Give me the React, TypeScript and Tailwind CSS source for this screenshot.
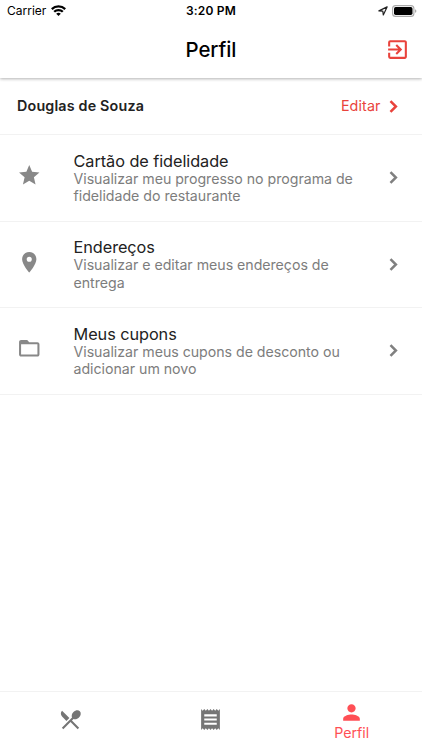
import React from 'react';
import {
  MdExitToApp,
  MdFolderOpen,
  MdLocationOn,
  MdPerson,
  MdReceipt,
  MdRestaurantMenu,
  MdStar,
} from 'react-icons/md';
import type { IconType } from 'react-icons';

interface MenuItem {
  title: string;
  description: string;
  icon: IconType;
}

const menuItems: MenuItem[] = [
  {
    title: 'Cartão de fidelidade',
    description: 'Visualizar meu progresso no programa de fidelidade do restaurante',
    icon: MdStar,
  },
  {
    title: 'Endereços',
    description: 'Visualizar e editar meus endereços de entrega',
    icon: MdLocationOn,
  },
  {
    title: 'Meus cupons',
    description: 'Visualizar meus cupons de desconto ou adicionar um novo',
    icon: MdFolderOpen,
  },
];

const Chevron: React.FC<{ className?: string }> = ({ className }) => (
  <svg className={`size-[25px] shrink-0 ${className ?? ''}`} viewBox="0 0 24 24" fill="none" stroke="currentColor" strokeWidth="2.4">
    <path d="M9.1 6.8 14.3 12l-5.2 5.2" />
  </svg>
);

const StatusBar: React.FC = () => (
  <div className="grid h-[21px] grid-cols-3 items-center text-[12px] leading-none text-black">
    <div className="flex items-center gap-[5px] pl-[7px]">
      <span>Carrier</span>
      <svg className="h-[11px] w-[15px]" viewBox="0 0 15 11" fill="none" stroke="currentColor" strokeWidth="2.3">
        <path d="M0.8 4.1a9.6 9.6 0 0 1 13.4 0" />
        <path d="M3.2 6.8a6.1 6.1 0 0 1 8.6 0" />
        <path d="M7.5 10.9 5.2 8.8a3.3 3.3 0 0 1 4.6 0z" fill="currentColor" stroke="none" />
      </svg>
    </div>
    <span className="text-center font-semibold tracking-[0.2px]">3:20 PM</span>
    <div className="flex items-center justify-end gap-[4px] pr-[5px]">
      <svg className="h-[10px] w-[10px]" viewBox="0 0 10 10" fill="none" stroke="#222" strokeWidth="1.2" strokeLinejoin="round">
        <path d="M9.1 0.9 0.9 4.9 4.8 5.2 5.3 9z" />
      </svg>
      <svg className="h-[12px] w-[25px]" viewBox="0 0 25 12" fill="none">
        <rect x="0.6" y="0.6" width="21.3" height="10.8" rx="3" stroke="#aaa" strokeWidth="1.1" />
        <rect x="2" y="2" width="18.5" height="8" rx="1.7" fill="#000" />
        <path d="M23.2 4.2c1.5.5 1.5 3.1 0 3.6z" fill="#999" />
      </svg>
    </div>
  </div>
);

const Header: React.FC = () => (
  <header className="relative z-10 h-[78px] bg-white shadow-[0_1px_3px_rgba(0,0,0,0.3)]">
    <StatusBar />
    <div className="grid h-[57px] grid-cols-3 items-center pr-[12px]">
      <span />
      <h1 className="pl-[12px] text-center text-[20.4px] font-medium leading-6 tracking-[-0.05px] text-black">Perfil</h1>
      <button className="justify-self-end" aria-label="Sair">
        <MdExitToApp className="size-[25px] text-[#e9433c]" />
      </button>
    </div>
  </header>
);

const MenuRow: React.FC<{ item: MenuItem }> = ({ item }) => {
  const Icon = item.icon;

  return (
    <li className="flex h-[86.5px] items-center border-b border-[#f2f2f2] pl-[16.5px] pr-[16.5px]">
      <Icon className="mb-[5px] size-[24.5px] shrink-0 text-[#888]" />
      <div className="ml-[32.5px] w-[290px] pt-px">
        <h2 className="text-[16.3px] leading-[18px] tracking-[-0.06px] text-[#222]">{item.title}</h2>
        <p className="text-[14.2px] leading-[17.4px] tracking-[-0.03px] text-[#7d7d7d]">{item.description}</p>
      </div>
      <Chevron className="ml-auto text-[#808080]" />
    </li>
  );
};

const BottomNav: React.FC = () => (
  <nav className="grid h-[59px] grid-cols-3 border-t border-[#f2f2f2] text-[#757575]">
    <button className="flex items-center justify-center pb-[4px]">
      <MdRestaurantMenu className="size-[25px]" />
    </button>
    <button className="flex items-center justify-center pb-[4px]">
      <MdReceipt className="size-[25px]" />
    </button>
    <button className="flex flex-col items-center pt-[8px] text-[#ff4f55]">
      <MdPerson className="size-[25px]" />
      <span className="text-[14.2px] leading-[16px]">Perfil</span>
    </button>
  </nav>
);

export default function App() {
  return (
    <div className="flex h-screen flex-col overflow-hidden bg-white font-['Inter',sans-serif]">
      <Header />
      <main className="flex-1">
        <div className="flex h-[57px] items-center justify-between border-b border-[#f2f2f2] pl-[17px] pr-[16.5px]">
          <span className="text-[14.3px] font-semibold tracking-[0.18px] text-[#222]">Douglas de Souza</span>
          <button className="flex items-center text-[14.3px] tracking-[0.1px] text-[#e9433c]">
            Editar
            <Chevron />
          </button>
        </div>
        <ul>
          {menuItems.map((item) => (
            <MenuRow key={item.title} item={item} />
          ))}
        </ul>
      </main>
      <BottomNav />
    </div>
  );
}
